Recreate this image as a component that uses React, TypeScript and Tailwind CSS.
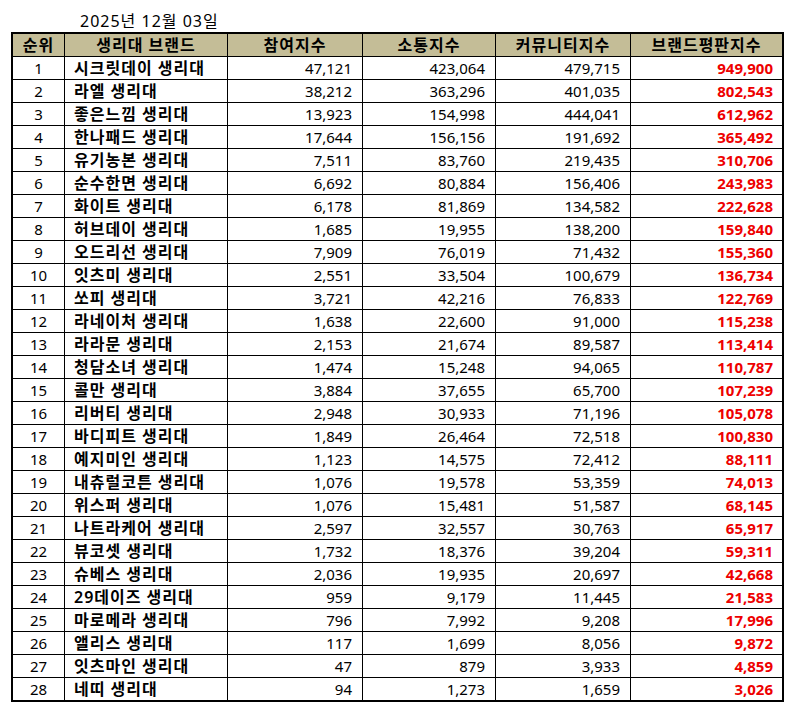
const rows: [number, string, string, string, string, string][] = [
  [1, "시크릿데이 생리대", "47,121", "423,064", "479,715", "949,900"],
  [2, "라엘 생리대", "38,212", "363,296", "401,035", "802,543"],
  [3, "좋은느낌 생리대", "13,923", "154,998", "444,041", "612,962"],
  [4, "한나패드 생리대", "17,644", "156,156", "191,692", "365,492"],
  [5, "유기농본 생리대", "7,511", "83,760", "219,435", "310,706"],
  [6, "순수한면 생리대", "6,692", "80,884", "156,406", "243,983"],
  [7, "화이트 생리대", "6,178", "81,869", "134,582", "222,628"],
  [8, "허브데이 생리대", "1,685", "19,955", "138,200", "159,840"],
  [9, "오드리선 생리대", "7,909", "76,019", "71,432", "155,360"],
  [10, "잇츠미 생리대", "2,551", "33,504", "100,679", "136,734"],
  [11, "쏘피 생리대", "3,721", "42,216", "76,833", "122,769"],
  [12, "라네이처 생리대", "1,638", "22,600", "91,000", "115,238"],
  [13, "라라문 생리대", "2,153", "21,674", "89,587", "113,414"],
  [14, "청담소녀 생리대", "1,474", "15,248", "94,065", "110,787"],
  [15, "콜만 생리대", "3,884", "37,655", "65,700", "107,239"],
  [16, "리버티 생리대", "2,948", "30,933", "71,196", "105,078"],
  [17, "바디피트 생리대", "1,849", "26,464", "72,518", "100,830"],
  [18, "예지미인 생리대", "1,123", "14,575", "72,412", "88,111"],
  [19, "내츄럴코튼 생리대", "1,076", "19,578", "53,359", "74,013"],
  [20, "위스퍼 생리대", "1,076", "15,481", "51,587", "68,145"],
  [21, "나트라케어 생리대", "2,597", "32,557", "30,763", "65,917"],
  [22, "뷰코셋 생리대", "1,732", "18,376", "39,204", "59,311"],
  [23, "슈베스 생리대", "2,036", "19,935", "20,697", "42,668"],
  [24, "29데이즈 생리대", "959", "9,179", "11,445", "21,583"],
  [25, "마로메라 생리대", "796", "7,992", "9,208", "17,996"],
  [26, "앨리스 생리대", "117", "1,699", "8,056", "9,872"],
  [27, "잇츠마인 생리대", "47", "879", "3,933", "4,859"],
  [28, "네띠 생리대", "94", "1,273", "1,659", "3,026"],
];

const cols = "grid grid-cols-[51px_163px_135px_133px_135px_152px]";

export default function App() {
  return (
    <div
      className="min-h-screen bg-white text-black text-[15px]"
      style={{ fontFamily: '"Noto Sans", "Noto Sans CJK KR", sans-serif' }}
    >
      <div className="h-[32px] pl-[80px] pt-[8px] text-[16px] leading-[26px] tracking-[1px]">2025년 12월 03일</div>
      <div className="ml-[11px] w-fit border-2 border-black">
        {/* header */}
        <div className={`${cols} h-[22px] bg-[#c4bd97] text-[16px] leading-[22px] font-semibold text-center tracking-[1px]`}>
          <div>순위</div>
          <div className="border-l border-black">생리대 브랜드</div>
          <div className="border-l border-black">참여지수</div>
          <div className="border-l border-black">소통지수</div>
          <div className="border-l border-black">커뮤니티지수</div>
          <div className="border-l border-black">브랜드평판지수</div>
        </div>
        {rows.map((r) => (
          <div key={r[0]} className={`${cols} h-[23px] border-t border-black leading-[22px]`}>
            <div className="text-center">{r[0]}</div>
            <div className="border-l border-black pl-[9px] text-[16px] font-semibold tracking-[1px] whitespace-nowrap">{r[1]}</div>
            <div className="border-l border-black pr-[10px] text-right">{r[2]}</div>
            <div className="border-l border-black pr-[10px] text-right">{r[3]}</div>
            <div className="border-l border-black pr-[10px] text-right">{r[4]}</div>
            <div className="border-l border-black pr-[9px] text-right font-bold text-[#ee0000]">{r[5]}</div>
          </div>
        ))}
      </div>
    </div>
  );
}
